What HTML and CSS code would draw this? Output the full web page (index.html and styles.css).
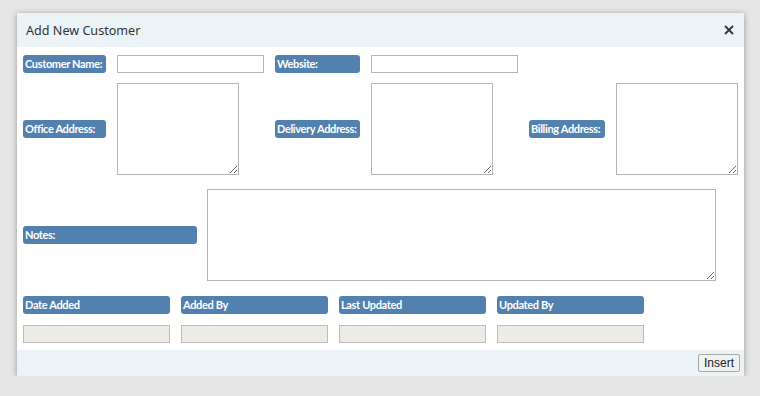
FILE: index.html
```html
<!DOCTYPE html>
<html lang="en">
<head>
	<meta charset="UTF-8">
	<title>Add New Customer</title>
	<link rel="stylesheet" href="styles.css">
</head>
<body>
	<div class="dialog">
		<div class="dialog-head">
			<span class="dialog-title">Add New Customer</span>
			<button class="close" title="Close">
				<svg width="10" height="10" viewBox="0 0 10 10"><path d="M1 1L9 9M9 1L1 9" stroke="#333" stroke-width="1.8"/></svg>
			</button>
		</div>
		<div class="dialog-body">
			<div class="grid row-top">
				<label class="lbl">Customer Name:</label>
				<input type="text" class="txt">
				<label class="lbl">Website:</label>
				<input type="text" class="txt">
			</div>
			<div class="grid row-addr">
				<label class="lbl">Office Address:</label>
				<textarea class="area"></textarea>
				<label class="lbl">Delivery Address:</label>
				<textarea class="area"></textarea>
				<label class="lbl">Billing Address:</label>
				<textarea class="area"></textarea>
			</div>
			<div class="row-notes">
				<label class="lbl notes-lbl">Notes:</label>
				<textarea class="area notes"></textarea>
			</div>
			<div class="audit">
				<div class="audit-col">
					<label class="lbl">Date Added</label>
					<input type="text" class="txt ro" disabled>
				</div>
				<div class="audit-col">
					<label class="lbl">Added By</label>
					<input type="text" class="txt ro" disabled>
				</div>
				<div class="audit-col">
					<label class="lbl">Last Updated</label>
					<input type="text" class="txt ro" disabled>
				</div>
				<div class="audit-col">
					<label class="lbl">Updated By</label>
					<input type="text" class="txt ro" disabled>
				</div>
			</div>
		</div>
		<div class="dialog-foot">
			<button class="insert">Insert</button>
		</div>
	</div>
</body>
</html>
```

FILE: styles.css
```css
body {
	margin: 0;
	background-color: #e6e6e6;
	font-family: "Noto Sans", "Open Sans", sans-serif;
}

.dialog {
	width: 727px;
	margin: 13px 0 0 17px;
	background-color: #fff;
	box-shadow: 0 1px 6px rgba(0, 0, 0, 0.35);
}

.dialog-head {
	display: flex;
	height: 34px;
	padding: 0 10px 0 9px;
	align-items: center;
	justify-content: space-between;
	background-color: #ebf3f6;
}

.dialog-title {
	font-size: 12.6px;
	color: #333;
}

.close {
	display: flex;
	padding: 0;
	border: none;
	background: none;
}

.dialog-body {
	padding: 8px 6px 7px 6px;
}

.grid {
	display: grid;
	grid-template-columns: 83px 147px 85px 147px 76px 122px;
	column-gap: 11px;
	align-items: center;
}

.lbl {
	display: block;
	height: 18px;
	padding-left: 2px;
	border-radius: 3px;
	background-color: #5281af;
	color: #fff;
	font-family: Lato, "Noto Sans", sans-serif;
	font-size: 11px;
	font-weight: bold;
	letter-spacing: -0.35px;
	line-height: 18px;
	white-space: nowrap;
	box-sizing: border-box;
}

.txt {
	height: 18px;
	margin: 0;
	padding: 0 3px;
	border: 1px solid #b5b5b5;
	box-sizing: border-box;
	font-size: 11px;
}

.ro {
	background-color: #ecebe6;
	border-color: #bdbdb8;
}

.area {
	width: 122px;
	height: 92px;
	margin: 0;
	padding: 2px;
	border: 1px solid #b5b5b5;
	box-sizing: border-box;
	font-family: inherit;
}

.row-addr {
	margin-top: 10px;
}

.row-notes {
	display: flex;
	margin-top: 14px;
	align-items: center;
}

.notes-lbl {
	width: 174px;
	margin-right: 10px;
}

.notes {
	width: 509px;
}

.audit {
	display: flex;
	margin-top: 15px;
	gap: 11px;
}

.audit-col {
	display: flex;
	width: 147px;
	flex-direction: column;
	gap: 11px;
}

.audit-col .txt {
	width: 147px;
}

.dialog-foot {
	display: flex;
	height: 26px;
	padding-right: 4px;
	align-items: center;
	justify-content: flex-end;
	background-color: #ebf3f6;
}

.insert {
	height: 18px;
	padding: 0 5px;
	border: 1px solid #a8a8a8;
	border-radius: 2px;
	background-color: #f2f2f2;
	font-family: "Liberation Sans", Arial, sans-serif;
	font-size: 12px;
	color: #222;
}
```
